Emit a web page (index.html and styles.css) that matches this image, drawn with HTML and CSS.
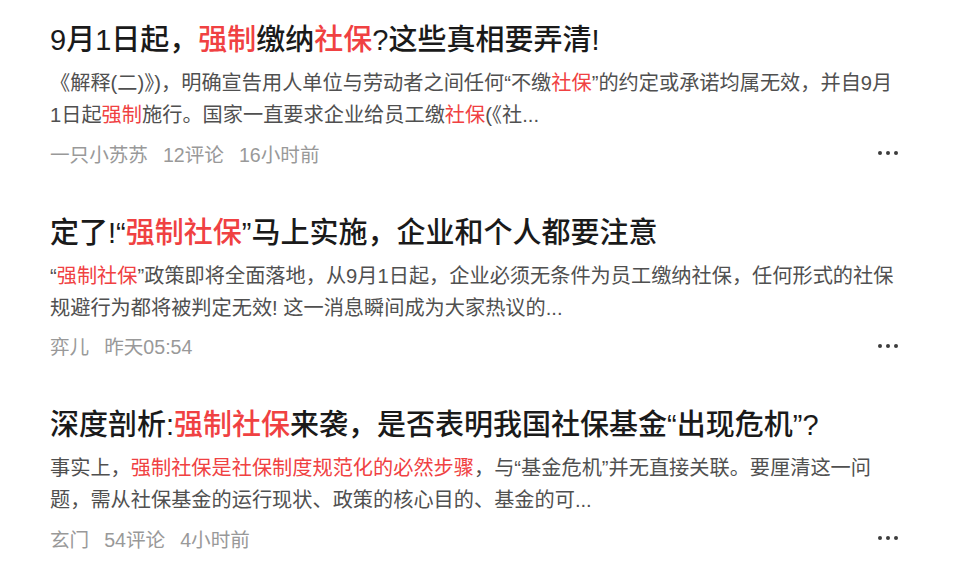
FILE: index.html
```html
<!DOCTYPE html>
<html lang="zh-CN">
<head>
<meta charset="utf-8">
<title>强制社保</title>
<link rel="stylesheet" href="styles.css">
</head>
<body>
<div class="feed">
  <article class="item">
    <h2 class="title">9月1日起，<em>强制</em>缴纳<em>社保</em>?这些真相要弄清!</h2>
    <p class="summary">《解释(二)》)，明确宣告用人单位与劳动者之间任何“不缴<em>社保</em>”的约定或承诺均属无效，并自9月<br>1日起<em>强制</em>施行。国家一直要求企业给员工缴<em>社保</em>(《社...</p>
    <div class="meta">
      <div class="info"><span>一只小苏苏</span><span>12评论</span><span>16小时前</span></div>
      <span class="more"><i></i><i></i><i></i></span>
    </div>
  </article>
  <article class="item">
    <h2 class="title">定了!“<em>强制社保</em>”马上实施，企业和个人都要注意</h2>
    <p class="summary">“<em>强制社保</em>”政策即将全面落地，从9月1日起，企业必须无条件为员工缴纳社保，任何形式的社保<br>规避行为都将被判定无效! 这一消息瞬间成为大家热议的...</p>
    <div class="meta">
      <div class="info"><span>弈儿</span><span>昨天05:54</span></div>
      <span class="more"><i></i><i></i><i></i></span>
    </div>
  </article>
  <article class="item">
    <h2 class="title">深度剖析:<em>强制社保</em>来袭，是否表明我国社保基金“出现危机”?</h2>
    <p class="summary">事实上，<em>强制社保是社保制度规范化的必然步骤</em>，与“基金危机”并无直接关联。要厘清这一问<br>题，需从社保基金的运行现状、政策的核心目的、基金的可...</p>
    <div class="meta">
      <div class="info"><span>玄门</span><span>54评论</span><span>4小时前</span></div>
      <span class="more"><i></i><i></i><i></i></span>
    </div>
  </article>
</div>
</body>
</html>
```

FILE: styles.css
```css
html, body {
  margin: 0;
  padding: 0;
  background: #ffffff;
}
body {
  font-family: "Liberation Sans", "Noto Sans CJK SC", sans-serif;
}
.feed {
  display: flex;
  flex-direction: column;
}
.item {
  padding: 20px 62px 0 50px;
  height: 172.5px;
}
.title {
  margin: 0;
  font-size: 29px;
  line-height: 40px;
  font-weight: 500;
  color: #1a1a1a;
  white-space: nowrap;
}
em {
  font-style: normal;
  color: #f04142;
}
.summary {
  margin: 7px 0 0;
  font-size: 20.2px;
  line-height: 32px;
  color: #505050;
  white-space: nowrap;
}
.meta {
  margin-top: 8px;
  height: 28px;
  display: flex;
  align-items: center;
  justify-content: space-between;
}
.info {
  display: flex;
  gap: 15px;
  font-size: 19.6px;
  color: #999999;
}
.more {
  display: flex;
  gap: 4px;
}
.more i {
  width: 4px;
  height: 4px;
  border-radius: 50%;
  background: #3d3d3d;
}
```
